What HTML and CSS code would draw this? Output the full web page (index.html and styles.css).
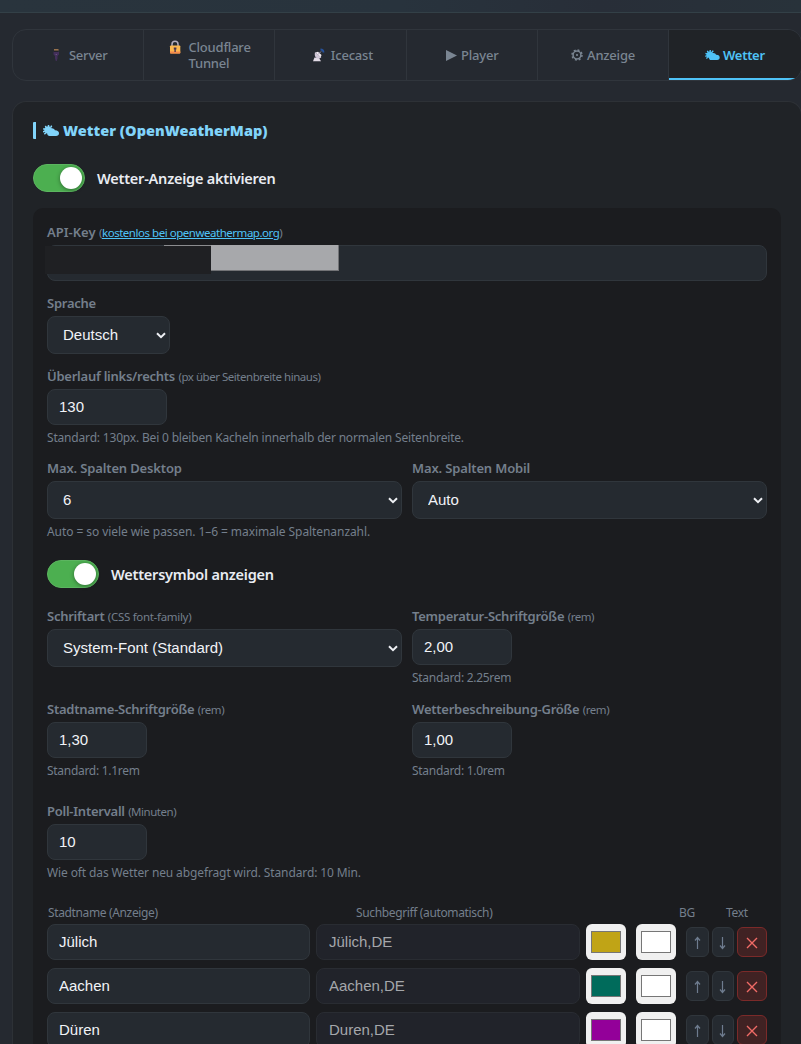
FILE: index.html
```html
<!DOCTYPE html>
<html lang="de">
<head>
<meta charset="utf-8">
<title>Wetter</title>
<link rel="stylesheet" href="styles.css">
</head>
<body>
<svg class="defs" width="0" height="0">
  <symbol id="cloud" viewBox="0 0 16 12">
    <path fill="currentColor" d="M4.200 8.600A3.600 3.600 0 0 1 1.200 5.200 4 4 0 0 1 8.600 3.300C10.600 3.200 11.600 4.400 11.900 5.300 14.500 5.200 16 6.600 16 8.300 16 10 14.800 11 13 11H6.600C5.200 11 4.200 10 4.200 8.600Z"/>
    <path stroke="currentColor" stroke-width="1.500" d="M5.500 0V2M2.300 1 3.400 2.600M.2 3.700 2 4.300M0 6.900 1.900 6.300M1.300 9.200 2.800 8M8.700.7 7.800 2.300"/>
  </symbol>
  <symbol id="chev" viewBox="0 0 10 7"><path d="M1 1.300 5 5.200 9 1.300" fill="none" stroke="#eef0f4" stroke-width="2"/></symbol>
  <symbol id="up" viewBox="0 0 8 14"><path d="M3.500 13V1.500M1 4.500 3.500 1.500 6 4.500" fill="none" stroke="currentColor" stroke-width="1.200"/></symbol>
  <symbol id="down" viewBox="0 0 8 14"><path d="M3.500 1V12.500M1 9.500 3.500 12.500 6 9.500" fill="none" stroke="currentColor" stroke-width="1.200"/></symbol>
  <symbol id="cross" viewBox="0 0 12 12"><path d="M1 1 11 11M11 1 1 11" fill="none" stroke="currentColor" stroke-width="1.400"/></symbol>
</svg>
<div class="topbar"></div>
<nav class="tabs">
  <a class="tab"><svg class="ico-server" viewBox="0 0 8 14"><path fill="#98724d" d="M2 1h4.500v1.800H2z"/><path fill="#432f5a" d="M1.500 3.800h5.500v2.700L5.500 8v2.500L4.700 13h-.9L3 10.500V8L1.500 6.500z"/><path fill="#20202a" d="M2 2.800h4v1H2z"/><path fill="#76608a" d="M3.700 6h1v1h-1z"/></svg><span>Server</span></a>
  <a class="tab"><svg class="ico-lock" viewBox="0 0 12 14"><path d="M3 6V4.300a3 3 0 0 1 6 0V6" fill="none" stroke="#b3adbd" stroke-width="1.500"/><rect x="1" y="5.500" width="10.300" height="8" rx=".8" fill="#fcb850"/><path fill="#f78a4c" d="M1 11.500h10.300v1.200q0 .8-.8.800H1.800q-.8 0-.8-.8z"/><path fill="#4a3550" d="M4.800 7.600h2.600v2h-.6V12H5.400V9.600h-.6z"/></svg><span>Cloudflare<br>Tunnel</span></a>
  <a class="tab"><svg class="ico-dish" viewBox="0 0 13 14"><path fill="#e2dae5" d="M1 13.300 2.500 9.500 7 10 9 13.300Z"/><path fill="#cfc5d6" d="M3 4Q2 8 4.500 10 7 11.500 9.300 9.500Z"/><path fill="#eee8f0" d="M3.500 4.500 6 3.800 9.500 7 8.800 9.300Z"/><path stroke="#a99eb4" d="M6 6.500 9 3.500"/><path fill="none" stroke="#26519a" stroke-width="1.800" d="M8.500 1.500Q11.500 1.500 11.500 4.500"/></svg><span>Icecast</span></a>
  <a class="tab"><svg class="ico-play" viewBox="0 0 11 11"><path fill="currentColor" d="M0 0 11 5.500 0 11z"/></svg><span>Player</span></a>
  <a class="tab"><svg class="ico-gear" viewBox="0 0 12 12"><circle cx="6" cy="6" r="3.900" fill="none" stroke="currentColor" stroke-width="1.500"/><circle cx="6" cy="6" r="1.100" fill="currentColor"/><circle cx="6" cy="6" r="5" fill="none" stroke="currentColor" stroke-width="1.500" stroke-dasharray="1.960 1.960"/></svg><span>Anzeige</span></a>
  <a class="tab active"><svg class="ico-cloud" viewBox="0 0 16 12"><use href="#cloud"/></svg><span>Wetter</span></a>
</nav>
<main class="card">
  <h2 class="title"><svg class="ico-title" viewBox="0 0 16 12"><use href="#cloud"/></svg><span>Wetter (OpenWeatherMap)</span></h2>
  <div class="switch-row"><span class="switch"></span><span>Wetter-Anzeige aktivieren</span></div>
  <section class="panel">
    <div class="field">
      <label><b class="open">API-Key</b> <small>(<a class="link" href="#">kostenlos bei openweathermap.org</a>)</small></label>
      <div class="keybox"><input type="text" class="wide"><span class="mask-dark"></span><span class="mask-light"></span><span class="mask-line"></span></div>
    </div>
    <div class="field">
      <label><b>Sprache</b></label>
      <div class="select lang"><select><option>Deutsch</option></select><svg class="chev"><use href="#chev"/></svg></div>
    </div>
    <div class="field">
      <label><b>Überlauf links/rechts</b> <small>(px über Seitenbreite hinaus)</small></label>
      <input type="text" class="mid" value="130">
      <p class="hint">Standard: 130px. Bei 0 bleiben Kacheln innerhalb der normalen Seitenbreite.</p>
    </div>
    <div class="cols">
      <div>
        <label><b class="near">Max. Spalten Desktop</b></label>
        <div class="select"><select><option>6</option></select><svg class="chev"><use href="#chev"/></svg></div>
        <p class="hint loose">Auto = so viele wie passen. 1–6 = maximale Spaltenanzahl.</p>
      </div>
      <div>
        <label><b class="near">Max. Spalten Mobil</b></label>
        <div class="select"><select><option>Auto</option></select><svg class="chev"><use href="#chev"/></svg></div>
      </div>
    </div>
    <div class="switch-row inner"><span class="switch"></span><span>Wettersymbol anzeigen</span></div>
    <div class="cols">
      <div>
        <label><b>Schriftart</b> <small class="near">(CSS font-family)</small></label>
        <div class="select"><select><option>System-Font (Standard)</option></select><svg class="chev"><use href="#chev"/></svg></div>
      </div>
      <div>
        <label><b>Temperatur-Schriftgröße</b> <small>(rem)</small></label>
        <input type="text" class="short" value="2,00">
        <p class="hint tight">Standard: 2.25rem</p>
      </div>
      <div>
        <label><b>Stadtname-Schriftgröße</b> <small>(rem)</small></label>
        <input type="text" class="short" value="1,30">
        <p class="hint tight">Standard: 1.1rem</p>
      </div>
      <div>
        <label><b>Wetterbeschreibung-Größe</b> <small>(rem)</small></label>
        <input type="text" class="short" value="1,00">
        <p class="hint tight">Standard: 1.0rem</p>
      </div>
    </div>
    <div class="poll">
      <label><b>Poll-Intervall</b> <small>(Minuten)</small></label>
      <input type="text" class="short" value="10">
      <p class="hint poll-hint">Wie oft das Wetter neu abgefragt wird. Standard: 10 Min.</p>
    </div>
    <div class="list-head"><span>Stadtname (Anzeige)</span><span>Suchbegriff (automatisch)</span><span>BG</span><span>Text</span></div>
    <div class="city"><input type="text" value="Jülich"><input type="text" class="auto" value="Jülich,DE"><span class="color"><i class="gold"></i></span><span class="color"><i></i></span><span class="acts"><button><svg class="arrow"><use href="#up"/></svg></button><button><svg class="arrow"><use href="#down"/></svg></button><button class="del"><svg class="cross"><use href="#cross"/></svg></button></span></div>
    <div class="city"><input type="text" value="Aachen"><input type="text" class="auto" value="Aachen,DE"><span class="color"><i class="teal"></i></span><span class="color"><i></i></span><span class="acts"><button><svg class="arrow"><use href="#up"/></svg></button><button><svg class="arrow"><use href="#down"/></svg></button><button class="del"><svg class="cross"><use href="#cross"/></svg></button></span></div>
    <div class="city"><input type="text" value="Düren"><input type="text" class="auto" value="Duren,DE"><span class="color"><i class="purple"></i></span><span class="color"><i></i></span><span class="acts"><button><svg class="arrow"><use href="#up"/></svg></button><button><svg class="arrow"><use href="#down"/></svg></button><button class="del"><svg class="cross"><use href="#cross"/></svg></button></span></div>
  </section>
</main>
</body>
</html>
```
FILE: styles.css
```css
* { box-sizing: border-box; }
html { height: 1044px; overflow: hidden; }
body { margin: 0; height: 1044px; overflow: hidden; background: #252930; color: #e9ecf2; font-family: "Noto Sans", "Open Sans", sans-serif; font-size: 13px; }
.defs { display: block; }
.topbar { height: 13px; background: linear-gradient(90deg, #29343d, #28333d 50%, #282e38 75%, #28323a); border-bottom: 1px solid #334047; }
.tabs { display: grid; grid-template-columns: repeat(6, minmax(0, 1fr)); width: 790px; height: 52px; margin: 16px 0 0 11.600px; border: 1px solid #30353c; border-radius: 14px; overflow: hidden; }
.tab { display: flex; align-items: center; justify-content: center; color: #7a8592; font-size: 13px; font-weight: 500; letter-spacing: -.2px; line-height: 16px; border-right: 1px solid #30353c; }
.tab:nth-child(1) { padding-left: 4px; }
.tab:nth-child(2) { padding-left: 2px; }
.tab:nth-child(3) { padding-left: 4px; }
.tab:nth-child(4) { padding-left: 1px; }
.tab.active { color: #4fc3f7; font-weight: 600; letter-spacing: -.3px; background: #202327; border-right: 0; border-bottom: 2px solid #4fc3f7; padding-top: 2px; }
.tab svg { flex: none; }
.ico-server { width: 8px; height: 14px; margin-right: 9px; }
.ico-lock { width: 12px; height: 14px; margin-right: 7px; align-self: flex-start; margin-top: 10px; }
.ico-dish { width: 13px; height: 14px; margin-right: 6px; }
.ico-play { width: 11px; height: 11px; margin-right: 4px; }
.ico-gear { width: 12px; height: 12px; margin-right: 4px; }
.ico-cloud { width: 15px; height: 11px; margin-right: 3px; }
.card { width: 790px; height: 943px; margin: 20px 0 0 12px; padding: 20px 20px 0; border: 1px solid #2d3136; border-bottom: 0; border-radius: 14px 14px 0 0; background: #202327; overflow: hidden; }
.title { display: flex; align-items: center; height: 17px; margin: 0; padding-left: 7px; border-left: 3px solid #81d4fa; border-radius: 1px; color: #81d4fa; font-size: 14.500px; font-weight: 900; line-height: 15px; white-space: nowrap; }
.title span { padding-bottom: 1px; letter-spacing: .03px; }
.ico-title { width: 16px; height: 12px; margin-right: 4px; }
.switch-row { display: flex; align-items: center; height: 28px; gap: 12px; margin-top: 25px; color: #e9ecf2; font-size: 14.500px; font-weight: 600; letter-spacing: -.23px; white-space: nowrap; }
.switch { flex: none; display: flex; align-items: center; justify-content: flex-end; width: 52px; height: 28px; padding-right: 2px; border: 1px solid #5cb560; border-radius: 14px; background: #4caf50; }
.switch::after { content: ""; width: 22px; height: 22px; border-radius: 50%; background: #fff; box-shadow: 0 1px 4px #0006; }
.switch-row.inner { margin-top: 17px; margin-bottom: 17px; }
.panel { margin-top: 16px; padding: 13px 14px 0; width: 748px; border-radius: 10px 10px 0 0; background: #1b1c1f; }
.field { margin-bottom: 11px; }
.field:nth-child(3) { margin-bottom: 8px; }
label { display: block; height: 24px; line-height: 22px; color: #747f8c; white-space: nowrap; }
label b { font-size: 13px; font-weight: 600; letter-spacing: -.25px; }
label b.near { letter-spacing: -.14px; }
label .open { letter-spacing: 0; }
small { font-size: 11.500px; letter-spacing: -.47px; }
small.near { letter-spacing: -.3px; }
.link { color: #4fc3f7; text-decoration: underline; }
.hint { margin: 0; height: 24px; line-height: 25px; color: #747f8c; font-size: 12px; letter-spacing: -.18px; white-space: nowrap; }
.hint.loose { letter-spacing: -.07px; }
.hint.tight { letter-spacing: -.29px; }
.poll-hint { letter-spacing: -.12px; }
input, select { display: block; appearance: none; margin: 0; outline: 0; height: 36px; padding: 0 11px 2px; border: 1px solid #30363c; border-radius: 8px; background: #252a30; color: #f1f3f7; font: 15px "Liberation Sans", Arial, sans-serif; }
.wide { width: 720px; }
.mid { width: 120px; }
.short { width: 100px; }
.keybox { position: relative; }
.mask-dark { position: absolute; left: -2px; top: 1px; width: 166px; height: 28px; background: #1f2023; }
.mask-light { position: absolute; left: 164px; top: 0; width: 128px; height: 26px; background: #a7a8ab; border: solid #727376; border-width: 0 1px 1px 0; }
.mask-line { position: absolute; left: 117px; top: 0; width: 47px; height: 1px; background: #8b8c8f; }
.select { position: relative; }
.select.lang { width: 123px; }
.select select { width: 100%; height: 38px; padding: 0 15px 2px; }
.chev { position: absolute; right: 4px; top: 16px; width: 10px; height: 7px; pointer-events: none; }
.cols { display: grid; grid-template-columns: 355px 355px; column-gap: 10px; row-gap: 9px; }
.poll { margin-top: 18px; margin-bottom: 18px; }
.list-head { display: grid; grid-template-columns: 308px 323px 47px 1fr; height: 22px; padding-left: 1px; line-height: 22px; color: #747f8c; font-size: 12px; letter-spacing: -.36px; white-space: nowrap; }
.city { display: grid; grid-template-columns: 263px 264px 40px 40px 81px; column-gap: 6px; height: 36px; margin-bottom: 8px; align-items: center; }
.city:last-child { margin-bottom: 0; }
.city input { width: 100%; min-width: 0; }
.city .auto { padding-left: 12px; background: #21232a; border-color: #292c32; color: #a5a7ab; }
.color { display: flex; align-items: center; justify-content: center; width: 40px; height: 36px; border-radius: 6px; background: #f0f0f0; }
.color:nth-child(4) { margin-left: 4px; }
.color i { width: 30px; height: 22px; border: 1px solid #767676; background: #fff; }
.color .gold { background: #c0a416; }
.color .teal { background: #006b5b; }
.color .purple { background: #930099; }
.acts { display: grid; grid-template-columns: 23px 22px 30px; gap: 3px; margin-left: 8px; }
button { display: flex; align-items: center; justify-content: center; height: 30px; padding: 2px 0 0; border: 1px solid #30363c; border-radius: 6px; background: #252a30; color: #6e7c8f; }
.arrow { width: 8px; height: 14px; }
.cross { width: 12px; height: 12px; }
.del { border-color: #7b2a29; background: #402223; color: #ef6b66; }
```
